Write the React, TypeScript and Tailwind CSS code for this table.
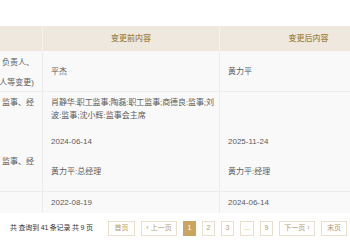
export default function App() {
  const cell = "px-2 text-[8px] leading-[13px] text-[#5c5c5c] whitespace-nowrap";
  const btn = "h-[15px] shrink-0 flex items-center justify-center border border-[#e8dfcc] whitespace-nowrap";
  return (
    <div className="w-[350px] h-[250px] bg-white overflow-hidden font-['Liberation_Sans','Noto_Sans_CJK_SC',sans-serif]">
      <div className="h-[26px]" />
      <div className="-ml-[134px] w-[531px]">
        {/* header */}
        <div className="grid grid-cols-[177px_177px_177px] h-[25px] bg-[#eee8de] text-[8px] text-[#a4843f] font-medium">
          <div className="flex items-center justify-center border-r border-[#f6f2ec]">变更项目</div>
          <div className="flex items-center justify-center border-r border-[#f6f2ec]">变更前内容</div>
          <div className="flex items-center justify-center">变更后内容</div>
        </div>
        {/* row 1 */}
        <div className="grid grid-cols-[177px_177px_177px] h-[41px] bg-[#f9f9f9] border-b border-[#ececec]">
          <div className={`${cell} text-right flex flex-col pt-[5px] gap-[7px] border-r border-[#ececec]`}>
            <span>负责人变更(法定代表人、负责人、</span>
            <span>首席代表、合伙事务执行人等变更)</span>
          </div>
          <div className={`${cell} flex items-center border-r border-[#ececec]`}>平杰</div>
          <div className={`${cell} flex items-center`}>黄力平</div>
        </div>
        {/* row 2 */}
        <div className="grid grid-cols-[177px_177px_177px] h-[100px] bg-[#f9f9f9] border-b border-[#ececec]">
          <div className={`${cell} text-right flex flex-col pt-[4px] border-r border-[#ececec]`}>
            <span>董事备案(董事、监事、经</span>
            <span className="mt-[46px]">董事备案(董事、监事、经</span>
          </div>
          <div className={`${cell} flex flex-col pt-[4px] border-r border-[#ececec]`}>
            <span className="tracking-[-0.1px]">肖静华:职工监事;陶磊:职工监事;商德良:监事;刘</span>
            <span>波:监事;沈小辉:监事会主席</span>
            <span className="mt-[13px]">2024-06-14</span>
            <span className="mt-[17px]">黄力平:总经理</span>
          </div>
          <div className={`${cell} flex flex-col pt-[4px]`}>
            <span className="mt-[39px]">2025-11-24</span>
            <span className="mt-[17px]">黄力平:经理</span>
          </div>
        </div>
        {/* row 3 */}
        <div className="grid grid-cols-[177px_177px_177px] h-[21px] bg-[#f9f9f9]">
          <div className={`${cell} border-r border-[#ececec]`} />
          <div className={`${cell} flex items-center border-r border-[#ececec]`}>2022-08-19</div>
          <div className={`${cell} flex items-center`}>2024-06-14</div>
        </div>
      </div>
      {/* pagination */}
      <div className="flex items-center justify-between mt-[8px] pl-[10px] pr-[3px] text-[7px]">
        <span className="text-[#333] whitespace-nowrap tracking-[-0.2px]">共 查询到 41 条记录 共 9 页</span>
        <div className="flex items-center gap-[6px] text-[#b49c6a]">
          <span className={`${btn} w-[27px]`}>首页</span>
          <span className={`${btn} w-[36px]`}>‹ 上一页</span>
          <span className="h-[15px] w-[13px] shrink-0 flex items-center justify-center bg-[#c9a55e] text-white">1</span>
          <span className={`${btn} w-[13px]`}>2</span>
          <span className={`${btn} w-[13px]`}>3</span>
          <span className={`${btn} w-[14px]`}>...</span>
          <span className={`${btn} w-[13px]`}>9</span>
          <span className={`${btn} w-[36px]`}>下一页 ›</span>
          <span className={`${btn} w-[26px]`}>末页</span>
        </div>
      </div>
    </div>
  );
}
